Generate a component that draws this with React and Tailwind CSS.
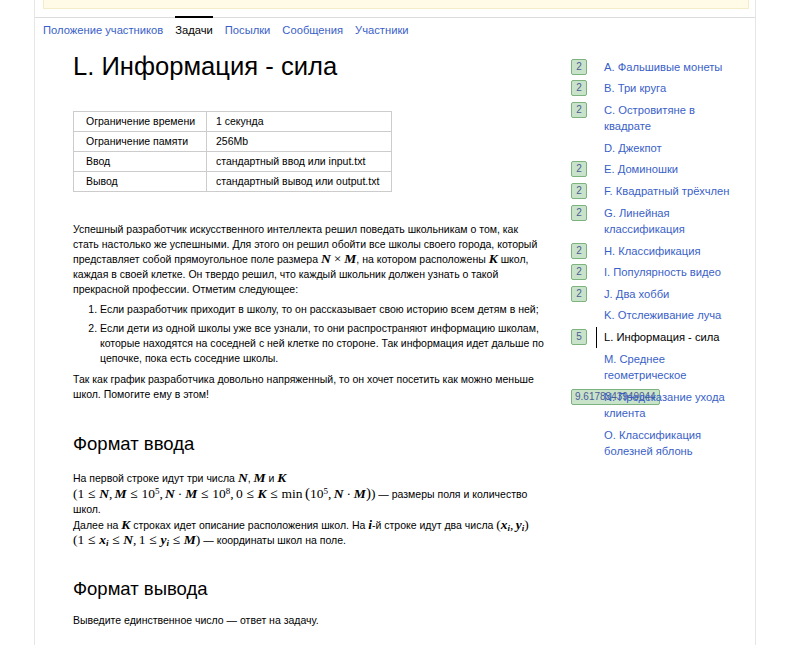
import React from "react";

const tabs = [
  { label: "Положение участников" },
  { label: "Задачи", active: true },
  { label: "Посылки" },
  { label: "Сообщения" },
  { label: "Участники" },
];

const problems = [
  { score: "2", title: "A. Фальшивые монеты" },
  { score: "2", title: "B. Три круга" },
  { score: "2", title: "C. Островитяне в квадрате" },
  { score: null, title: "D. Джекпот" },
  { score: "2", title: "E. Доминошки" },
  { score: "2", title: "F. Квадратный трёхчлен" },
  { score: "2", title: "G. Линейная классификация" },
  { score: "2", title: "H. Классификация" },
  { score: "2", title: "I. Популярность видео" },
  { score: "2", title: "J. Два хобби" },
  { score: null, title: "K. Отслеживание луча" },
  { score: "5", title: "L. Информация - сила", active: true },
  { score: null, title: "M. Среднее геометрическое" },
  { score: "9.6178343949044", title: "N. Предсказание ухода клиента" },
  { score: null, title: "O. Классификация болезней яблонь" },
];

const limits = [
  ["Ограничение времени", "1 секунда"],
  ["Ограничение памяти", "256Mb"],
  ["Ввод", "стандартный ввод или input.txt"],
  ["Вывод", "стандартный вывод или output.txt"],
];

// inline formula, spacing roughly like TeX
function M({ children }) {
  return (
    <span className="whitespace-nowrap font-['Liberation_Serif',serif] text-[13.5px] leading-none">
      {children}
    </span>
  );
}

function V({ children }) {
  return <i className="font-semibold">{children}</i>;
}

const Le = () => <span className="mx-[0.278em]">≤</span>;
const Dot = () => <span className="mx-[0.222em]">·</span>;
const Times = () => <span className="mx-[0.222em]">×</span>;
const C = () => <span className="mr-[0.167em]">,</span>;

function Sup({ children }) {
  return <sup className="text-[9px] leading-none">{children}</sup>;
}

function Sub({ children }) {
  return <sub className="text-[9px] font-semibold italic leading-none">{children}</sub>;
}

export default function App() {
  return (
    <div className="min-h-screen bg-white font-['Liberation_Sans',Arial,sans-serif] text-black">
      <div className="ml-[34px] w-[722px] min-h-[645px] border-x border-[#e6e6e6]">
        {/* notice box */}
        <div className="ml-2 mr-[6px] h-[9px] border border-t-0 border-[#f3ecc6] bg-[#fffbe6]" />

        {/* tabs */}
        <div className="mt-2 border-t border-[#dcdcdc]">
          <div className="-mt-[2px] flex gap-3 pl-2 text-[11.2px] leading-4">
            {tabs.map((t) => (
              <span
                key={t.label}
                className={
                  t.active
                    ? "border-t-2 border-black pt-1 text-black"
                    : "border-t-2 border-transparent pt-1 text-[#3a5fc8]"
                }
              >
                {t.label}
              </span>
            ))}
          </div>
        </div>

        <div className="flex pl-[38px]">
          {/* statement */}
          <div className="w-[473px] shrink-0">
            <h1 className="mt-3 text-[25.6px] leading-8">L. Информация - сила</h1>

            <table className="mt-[29px] border-collapse text-[10.5px]">
              <tbody>
                {limits.map(([k, v]) => (
                  <tr key={k}>
                    <td className="h-5 w-[133px] border border-[#cccccc] py-0 pl-3 leading-[19px]">{k}</td>
                    <td className="h-5 w-[185px] border border-[#cccccc] py-0 pl-[9px] leading-[19px]">{v}</td>
                  </tr>
                ))}
              </tbody>
            </table>

            <div className="mt-[30px] text-[10.5px] leading-[15px]">
              <p>
                Успешный разработчик искусственного интеллекта решил поведать школьникам о том, как
                стать настолько же успешными. Для этого он решил обойти все школы своего города, который
                представляет собой прямоугольное поле размера{" "}
                <M>
                  <V>N</V>
                  <Times />
                  <V>M</V>
                </M>
                , на котором расположены{" "}
                <M>
                  <V>K</V>
                </M>{" "}
                школ, каждая в своей клетке. Он твердо решил, что каждый школьник должен узнать о такой
                прекрасной профессии. Отметим следующее:
              </p>
              <ol className="mt-[5px] list-decimal pl-[27px]">
                <li>Если разработчик приходит в школу, то он рассказывает свою историю всем детям в ней;</li>
                <li className="mt-1">
                  Если дети из одной школы уже все узнали, то они распространяют информацию школам,
                  которые находятся на соседней с ней клетке по стороне. Так информация идет дальше по
                  цепочке, пока есть соседние школы.
                </li>
              </ol>
              <p className="mt-[6px]">
                Так как график разработчика довольно напряженный, то он хочет посетить как можно меньше
                школ. Помогите ему в этом!
              </p>
            </div>

            <h2 className="mt-[30px] text-[18.5px] leading-6">Формат ввода</h2>
            <div className="mt-[15px] text-[10.5px] leading-[15px]">
              <p>
                На первой строке идут три числа{" "}
                <M>
                  <V>N</V>
                </M>
                ,{" "}
                <M>
                  <V>M</V>
                </M>{" "}
                и{" "}
                <M>
                  <V>K</V>
                </M>{" "}
                <M>
                  (1<Le />
                  <V>N</V>
                  <C />
                  <V>M</V>
                  <Le />
                  10<Sup>5</Sup>
                  <C />
                  <V>N</V>
                  <Dot />
                  <V>M</V>
                  <Le />
                  10<Sup>8</Sup>
                  <C />
                  0<Le />
                  <V>K</V>
                  <Le />
                  min<span className="ml-[0.167em] text-[15px]">(</span>10<Sup>5</Sup>
                  <C />
                  <V>N</V>
                  <Dot />
                  <V>M</V>
                  <span className="text-[15px]">)</span>)
                </M>{" "}
                — размеры поля и количество школ.
              </p>
              <p className="mt-[1px]">
                Далее на{" "}
                <M>
                  <V>K</V>
                </M>{" "}
                строках идет описание расположения школ. На{" "}
                <M>
                  <V>i</V>
                </M>
                -й строке идут два числа{" "}
                <M>
                  (<V>x</V>
                  <Sub>i</Sub>
                  <C />
                  <V>y</V>
                  <Sub>i</Sub>)
                </M>{" "}
                <M>
                  (1<Le />
                  <V>x</V>
                  <Sub>i</Sub>
                  <Le />
                  <V>N</V>
                  <C />1<Le />
                  <V>y</V>
                  <Sub>i</Sub>
                  <Le />
                  <V>M</V>)
                </M>{" "}
                — координаты школ на поле.
              </p>
            </div>

            <h2 className="mt-[29px] text-[18.5px] leading-6">Формат вывода</h2>
            <p className="mt-[12px] text-[10.5px] leading-[15px]">
              Выведите единственное число — ответ на задачу.
            </p>
          </div>

          {/* problem list */}
          <ul className="ml-[25px] w-[168px] shrink-0 pt-[18px] text-[11.2px] leading-[16.5px]">
            {problems.map((p) => (
              <li key={p.title} className="relative py-[2.55px] pl-[33px]">
                {p.score && (
                  <span className="absolute left-0 top-[2.5px] flex h-4 min-w-4 items-center justify-center whitespace-nowrap rounded-[2px] border border-[#7db37f] bg-[#c9e3ca] px-[3px] text-[10px] leading-none text-[#4a5b95]">
                    {p.score}
                  </span>
                )}
                {p.active && <span className="absolute bottom-0 left-[25px] top-0 w-px bg-black" />}
                <span className={p.active ? "relative text-black" : "relative text-[#3a5fc8]"}>
                  {p.title}
                </span>
              </li>
            ))}
          </ul>
        </div>
      </div>
    </div>
  );
}
